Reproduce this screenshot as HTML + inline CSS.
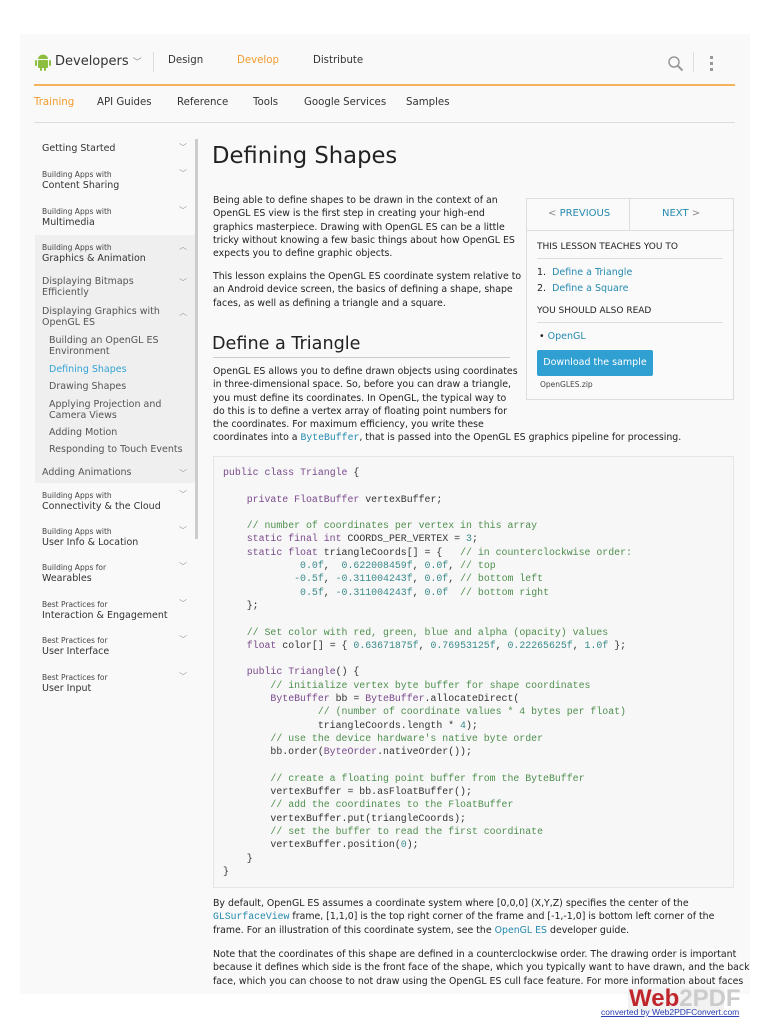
<!DOCTYPE html>
<html><head><meta charset="utf-8"><style>
*{margin:0;padding:0;box-sizing:border-box}
body{width:768px;height:1024px;overflow:hidden;background:#fff;font-family:"DejaVu Sans","Liberation Sans",sans-serif;color:#222;position:relative}
.pg{position:absolute;left:20px;top:34px;width:730px;height:960px;background:#f9f9f9}
.a{position:absolute;white-space:nowrap}
.nav{font-size:10.2px;color:#333}
.sb{font-size:9.5px;color:#333;line-height:11px}
.sm{font-size:7.5px;color:#444}
.chev{position:absolute;left:179px;font-size:8px;color:#999}
p.t{position:absolute;left:213px;font-size:9.4px;line-height:13.3px;color:#222}
.code{position:absolute;left:213px;top:456px;width:521px;height:432px;border:1px solid #e5e5e5;background:#f7f7f7}
pre{position:absolute;left:223px;top:466px;font-family:"Liberation Mono","DejaVu Sans Mono",monospace;font-size:9.9px;line-height:13.3px;color:#333}
.k{color:#7a4a8c}.c{color:#4f8f4f}.n{color:#3a8a8a}
a{color:#258aaf;text-decoration:none}
.mono{font-family:"Liberation Mono",monospace;color:#258aaf;font-size:9.8px}
</style></head><body>
<div class="pg"></div>
<svg class="a" style="left:34px;top:53px" width="18" height="18" viewBox="0 0 18 18"><rect x="4" y="7" width="10" height="8" rx="1" fill="#8cbf3f"/><path d="M4 6a5 4.5 0 0 1 10 0z" fill="#8cbf3f"/><rect x="1" y="7" width="2" height="6" rx="1" fill="#8cbf3f"/><rect x="15" y="7" width="2" height="6" rx="1" fill="#8cbf3f"/><rect x="6" y="14" width="2" height="4" rx="1" fill="#8cbf3f"/><rect x="10" y="14" width="2" height="4" rx="1" fill="#8cbf3f"/></svg>
<div class="a" style="left:55px;top:54px;font-size:13px;color:#333">Developers <span style="font-size:9px;color:#888">﹀</span></div>
<div class="a" style="left:153px;top:52px;width:1px;height:20px;background:#ddd"></div>
<div class="a nav" style="left:168px;top:55px">Design</div>
<div class="a nav" style="left:237px;top:55px;color:#f19b2c">Develop</div>
<div class="a nav" style="left:313px;top:55px">Distribute</div>
<svg class="a" style="left:667px;top:55px" width="18" height="18"><circle cx="7" cy="7" r="5" stroke="#999" stroke-width="1.5" fill="none"/><path d="M10.5 10.5l5 5" stroke="#999" stroke-width="2"/></svg>
<div class="a" style="left:693px;top:52px;width:1px;height:20px;background:#ddd"></div>
<div class="a" style="left:710px;top:56px;width:3px;height:3px;background:#999;box-shadow:0 6px #999,0 12px #999"></div>
<div class="a" style="left:34px;top:84px;width:701px;height:2px;background:#f2b35a"></div>
<div class="a nav" style="left:34px;top:97px;color:#f19b2c">Training</div>
<div class="a nav" style="left:97px;top:97px">API Guides</div>
<div class="a nav" style="left:177px;top:97px">Reference</div>
<div class="a nav" style="left:253px;top:97px">Tools</div>
<div class="a nav" style="left:304px;top:97px">Google Services</div>
<div class="a nav" style="left:406px;top:97px">Samples</div>
<div class="a" style="left:34px;top:122px;width:701px;height:1px;background:#ddd"></div>
<div class="a" style="left:35px;top:235px;width:160px;height:248px;background:#efefef"></div>
<div class="a" style="left:195px;top:139px;width:3px;height:400px;background:#ccc"></div>
<div class="a sb" style="left:42px;top:143px">Getting Started</div><div class="chev" style="top:142px">﹀</div>
<div class="a sb" style="left:42px;top:169px"><span class="sm">Building Apps with</span><br>Content Sharing</div><div class="chev" style="top:168px">﹀</div>
<div class="a sb" style="left:42px;top:206px"><span class="sm">Building Apps with</span><br>Multimedia</div><div class="chev" style="top:205px">﹀</div>
<div class="a sb" style="left:42px;top:242px"><span class="sm">Building Apps with</span><br>Graphics &amp; Animation</div><div class="chev" style="top:241px">︿</div>
<div class="a sb" style="left:42px;top:276px;color:#555">Displaying Bitmaps<br>Efficiently</div><div class="chev" style="top:277px">﹀</div>
<div class="a sb" style="left:42px;top:306px;color:#555">Displaying Graphics with<br>OpenGL ES</div><div class="chev" style="top:307px">︿</div>
<div class="a sb" style="left:49px;top:335px;color:#555">Building an OpenGL ES<br>Environment</div>
<div class="a sb" style="left:49px;top:364px;color:#33a3d4">Defining Shapes</div>
<div class="a sb" style="left:49px;top:381px;color:#555">Drawing Shapes</div>
<div class="a sb" style="left:49px;top:399px;color:#555">Applying Projection and<br>Camera Views</div>
<div class="a sb" style="left:49px;top:427px;color:#555">Adding Motion</div>
<div class="a sb" style="left:49px;top:444px;color:#555">Responding to Touch Events</div>
<div class="a sb" style="left:42px;top:467px;color:#555">Adding Animations</div><div class="chev" style="top:468px">﹀</div>
<div class="a sb" style="left:42px;top:490px"><span class="sm">Building Apps with</span><br>Connectivity &amp; the Cloud</div><div class="chev" style="top:489px">﹀</div>
<div class="a sb" style="left:42px;top:526px"><span class="sm">Building Apps with</span><br>User Info &amp; Location</div><div class="chev" style="top:525px">﹀</div>
<div class="a sb" style="left:42px;top:562px"><span class="sm">Building Apps for</span><br>Wearables</div><div class="chev" style="top:561px">﹀</div>
<div class="a sb" style="left:42px;top:599px"><span class="sm">Best Practices for</span><br>Interaction &amp; Engagement</div><div class="chev" style="top:598px">﹀</div>
<div class="a sb" style="left:42px;top:635px"><span class="sm">Best Practices for</span><br>User Interface</div><div class="chev" style="top:634px">﹀</div>
<div class="a sb" style="left:42px;top:672px"><span class="sm">Best Practices for</span><br>User Input</div><div class="chev" style="top:671px">﹀</div>
<div class="a" style="left:212px;top:143px;font-size:22.7px;color:#222">Defining Shapes</div>
<p class="t" style="top:194px">Being able to define shapes to be drawn in the context of an<br>OpenGL ES view is the first step in creating your high-end<br>graphics masterpiece. Drawing with OpenGL ES can be a little<br>tricky without knowing a few basic things about how OpenGL ES<br>expects you to define graphic objects.</p>
<p class="t" style="top:270px">This lesson explains the OpenGL ES coordinate system relative to<br>an Android device screen, the basics of defining a shape, shape<br>faces, as well as defining a triangle and a square.</p>
<div class="a" style="left:212px;top:334px;font-size:17.6px;color:#222">Define a Triangle</div>
<div class="a" style="left:213px;top:357px;width:297px;height:1px;background:#ccc"></div>
<p class="t" style="top:365px">OpenGL ES allows you to define drawn objects using coordinates<br>in three-dimensional space. So, before you can draw a triangle,<br>you must define its coordinates. In OpenGL, the typical way to<br>do this is to define a vertex array of floating point numbers for<br>the coordinates. For maximum efficiency, you write these<br>coordinates into a <span class="mono">ByteBuffer</span>, that is passed into the OpenGL ES graphics pipeline for processing.</p>
<div class="a" style="left:526px;top:198px;width:208px;height:202px;border:1px solid #ddd;background:#fafafa"></div>
<div class="a" style="left:526px;top:230px;width:208px;height:1px;background:#ddd"></div>
<div class="a" style="left:629px;top:198px;width:1px;height:32px;background:#ddd"></div>
<div class="a" style="left:548px;top:208px;font-size:10px;color:#258aaf"><span style="color:#888">&lt;</span> PREVIOUS</div>
<div class="a" style="left:662px;top:208px;font-size:10px;color:#258aaf">NEXT <span style="color:#888">&gt;</span></div>
<div class="a" style="left:537px;top:242px;font-size:9px;color:#222">THIS LESSON TEACHES YOU TO</div>
<div class="a" style="left:537px;top:258px;width:186px;height:1px;background:#ddd"></div>
<div class="a" style="left:537px;top:265px;font-size:9.5px;line-height:15.5px">1.&nbsp; <a>Define a Triangle</a><br>2.&nbsp; <a>Define a Square</a></div>
<div class="a" style="left:537px;top:306px;font-size:9px;color:#222">YOU SHOULD ALSO READ</div>
<div class="a" style="left:537px;top:322px;width:186px;height:1px;background:#ddd"></div>
<div class="a" style="left:539px;top:331px;font-size:9.5px">• <a>OpenGL</a></div>
<div class="a" style="left:537px;top:350px;width:116px;height:26px;background:#30a0d2;border-radius:2px;color:#fff;font-size:9.5px;line-height:26px;text-align:center">Download the sample</div>
<div class="a" style="left:540px;top:380px;font-size:7.5px;color:#444">OpenGLES.zip</div>
<div class="code"></div>
<pre><span class="k">public class</span> <span class="k">Triangle</span> {

    <span class="k">private</span> <span class="k">FloatBuffer</span> vertexBuffer;

    <span class="c">// number of coordinates per vertex in this array</span>
    <span class="k">static final int</span> COORDS_PER_VERTEX = <span class="n">3</span>;
    <span class="k">static float</span> triangleCoords[] = {   <span class="c">// in counterclockwise order:</span>
             <span class="n">0.0f</span>,  <span class="n">0.622008459f</span>, <span class="n">0.0f</span>, <span class="c">// top</span>
            <span class="n">-0.5f</span>, <span class="n">-0.311004243f</span>, <span class="n">0.0f</span>, <span class="c">// bottom left</span>
             <span class="n">0.5f</span>, <span class="n">-0.311004243f</span>, <span class="n">0.0f</span>  <span class="c">// bottom right</span>
    };

    <span class="c">// Set color with red, green, blue and alpha (opacity) values</span>
    <span class="k">float</span> color[] = { <span class="n">0.63671875f</span>, <span class="n">0.76953125f</span>, <span class="n">0.22265625f</span>, <span class="n">1.0f</span> };

    <span class="k">public</span> <span class="k">Triangle</span>() {
        <span class="c">// initialize vertex byte buffer for shape coordinates</span>
        <span class="k">ByteBuffer</span> bb = <span class="k">ByteBuffer</span>.allocateDirect(
                <span class="c">// (number of coordinate values * 4 bytes per float)</span>
                triangleCoords.length * <span class="n">4</span>);
        <span class="c">// use the device hardware's native byte order</span>
        bb.order(<span class="k">ByteOrder</span>.nativeOrder());

        <span class="c">// create a floating point buffer from the ByteBuffer</span>
        vertexBuffer = bb.asFloatBuffer();
        <span class="c">// add the coordinates to the FloatBuffer</span>
        vertexBuffer.put(triangleCoords);
        <span class="c">// set the buffer to read the first coordinate</span>
        vertexBuffer.position(<span class="n">0</span>);
    }
}</pre>
<p class="t" style="top:897px">By default, OpenGL ES assumes a coordinate system where [0,0,0] (X,Y,Z) specifies the center of the<br><span class="mono">GLSurfaceView</span> frame, [1,1,0] is the top right corner of the frame and [-1,-1,0] is bottom left corner of the<br>frame. For an illustration of this coordinate system, see the <a>OpenGL ES</a> developer guide.</p>
<p class="t" style="top:948px">Note that the coordinates of this shape are defined in a counterclockwise order. The drawing order is important<br>because it defines which side is the front face of the shape, which you typically want to have drawn, and the back<br>face, which you can choose to not draw using the OpenGL ES cull face feature. For more information about faces</p>
<div class="a" style="left:628px;top:987px;width:96px;height:26px;background:#f2f2f2"></div>
<div class="a" style="left:629px;top:985px;font-size:24px;font-weight:bold;font-family:'Liberation Sans',sans-serif;color:#c0272d">Web<span style="color:#ccc">2PDF</span></div>
<div class="a" style="left:601px;top:1007px;font-size:8.5px;font-family:'Liberation Sans',sans-serif;color:#2a3fb5;text-decoration:underline">converted by Web2PDFConvert.com</div>
</body></html>
